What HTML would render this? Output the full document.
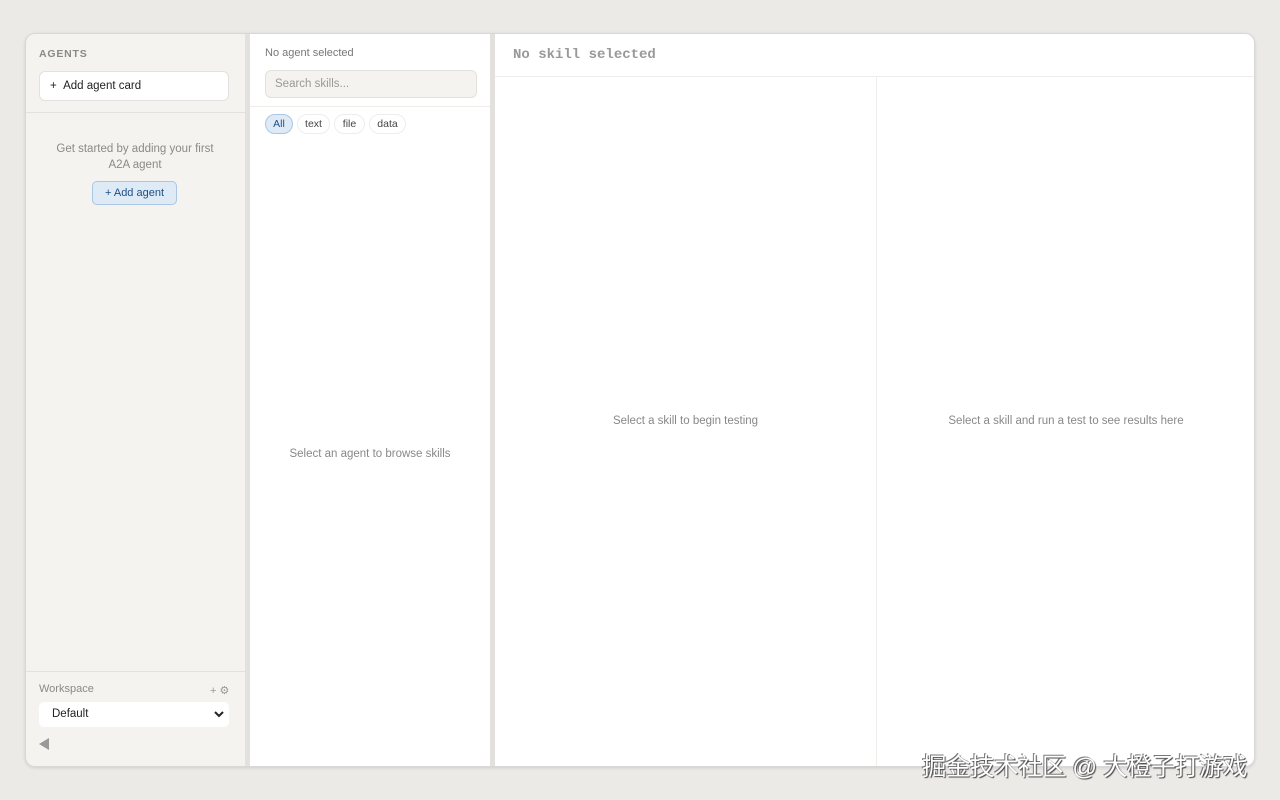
<!DOCTYPE html>
<html><head><meta charset="utf-8"><style>
*{box-sizing:border-box;margin:0;padding:0}
body{width:1280px;height:800px;background:#ebeae6;font-family:"Liberation Sans",sans-serif;position:relative;overflow:hidden}
.win{position:absolute;left:25px;top:33px;width:1230px;height:734px;border-radius:10px;background:#e2e1dd;overflow:hidden;box-shadow:0 1px 3px rgba(0,0,0,.12);border:1px solid #d9d8d4}
.side{position:absolute;left:-1px;top:0;width:220px;height:100%;background:#f4f3f0}
.sk{position:absolute;left:224px;top:0;width:240px;height:100%;background:#fff}
.main{position:absolute;left:469px;top:0;right:0;height:100%;background:#fff}
.t{position:absolute;font-size:11.5px;color:#888;white-space:nowrap}
</style></head><body>
<div class="win">
 <div class="side">
  <div class="t" style="left:14px;top:14px;font-size:10.5px;font-weight:bold;letter-spacing:.8px;color:#8a8a86">AGENTS</div>
  <div style="position:absolute;left:14px;top:37px;width:190px;height:30px;background:#fff;border:1px solid #e2e1dd;border-radius:6px;font-size:11.5px;color:#222;line-height:28px;padding-left:10px">+&nbsp;&nbsp;Add agent card</div>
  <div style="position:absolute;left:0;top:78px;width:220px;border-top:1px solid #e2e1dd"></div>
  <div class="t" style="left:0;width:220px;text-align:center;top:107px;line-height:16px;white-space:normal;color:#8a8a86">Get started by adding your first<br>A2A agent</div>
  <div style="position:absolute;left:67px;top:147px;width:85px;height:24px;background:#deebf7;border:1px solid #a9c6e3;border-radius:5px;font-size:11px;color:#1d4f85;text-align:center;line-height:22px">+ Add agent</div>
  <div style="position:absolute;left:0;top:637px;width:220px;border-top:1px solid #e2e1dd"></div>
  <div class="t" style="left:14px;top:649px;color:#8a8a86;font-size:11px">Workspace</div>
  <div class="t" style="left:185px;top:650px;color:#999;font-size:11px">+ ⚙</div>
  <div style="position:absolute;left:14px;top:668px;width:190px;height:25px;background:#fff;border-radius:5px;font-size:11.5px;color:#222;line-height:25px;padding-left:13px">Default<svg style="position:absolute;right:5px;top:9px" width="10" height="7" viewBox="0 0 10 7"><path d="M1 1l4 4 4-4" stroke="#222" stroke-width="2" fill="none"/></svg></div>
  <svg style="position:absolute;left:14px;top:704px" width="10" height="12"><path d="M10 0L0 6l10 6z" fill="#999"/></svg>
 </div>
 <div class="sk">
  <div class="t" style="left:15px;top:13px;color:#777;font-size:11px">No agent selected</div>
  <div style="position:absolute;left:15px;top:36px;width:212px;height:28px;background:#f4f3f0;border:1px solid #e2e1dd;border-radius:6px;font-size:11.5px;color:#999;line-height:26px;padding-left:9px">Search skills...</div>
  <div style="position:absolute;left:0;top:72px;width:240px;border-top:1px solid #eeedea"></div>
  <div style="position:absolute;left:15px;top:80px;width:28px;height:20px;border-radius:10px;background:#deebf7;border:1px solid #a9c6e3;font-size:10.5px;color:#1d4f85;text-align:center;line-height:18px">All</div>
  <div style="position:absolute;left:47px;top:80px;width:33px;height:20px;border-radius:10px;border:1px solid #eeedea;font-size:10.5px;color:#444;text-align:center;line-height:18px">text</div>
  <div style="position:absolute;left:84px;top:80px;width:31px;height:20px;border-radius:10px;border:1px solid #eeedea;font-size:10.5px;color:#444;text-align:center;line-height:18px">file</div>
  <div style="position:absolute;left:119px;top:80px;width:37px;height:20px;border-radius:10px;border:1px solid #eeedea;font-size:10.5px;color:#444;text-align:center;line-height:18px">data</div>
  <div class="t" style="left:0;width:240px;text-align:center;top:414px">Select an agent to browse skills</div>
 </div>
 <div class="main">
  <div class="t" style="left:18px;top:13px;font-family:'Liberation Mono',monospace;font-size:14px;font-weight:bold;color:#999">No skill selected</div>
  <div style="position:absolute;left:0;top:42px;right:0;border-top:1px solid #eeedea"></div>
  <div style="position:absolute;left:381px;top:42px;bottom:0;border-left:1px solid #eeedea"></div>
  <div class="t" style="left:0;width:381px;text-align:center;top:381px">Select a skill to begin testing</div>
  <div class="t" style="left:381px;width:380px;text-align:center;top:381px">Select a skill and run a test to see results here</div>
 </div>
</div>
<div style="position:absolute;left:922px;top:748px;font-family:'Liberation Sans','Noto Sans CJK SC',sans-serif;font-size:24.5px;letter-spacing:-0.5px;color:#fff;text-shadow:1px 1px 1px #444,-1px -1px 0 #777;white-space:nowrap">掘金技术社区 @ 大橙子打游戏</div>
</body></html>
